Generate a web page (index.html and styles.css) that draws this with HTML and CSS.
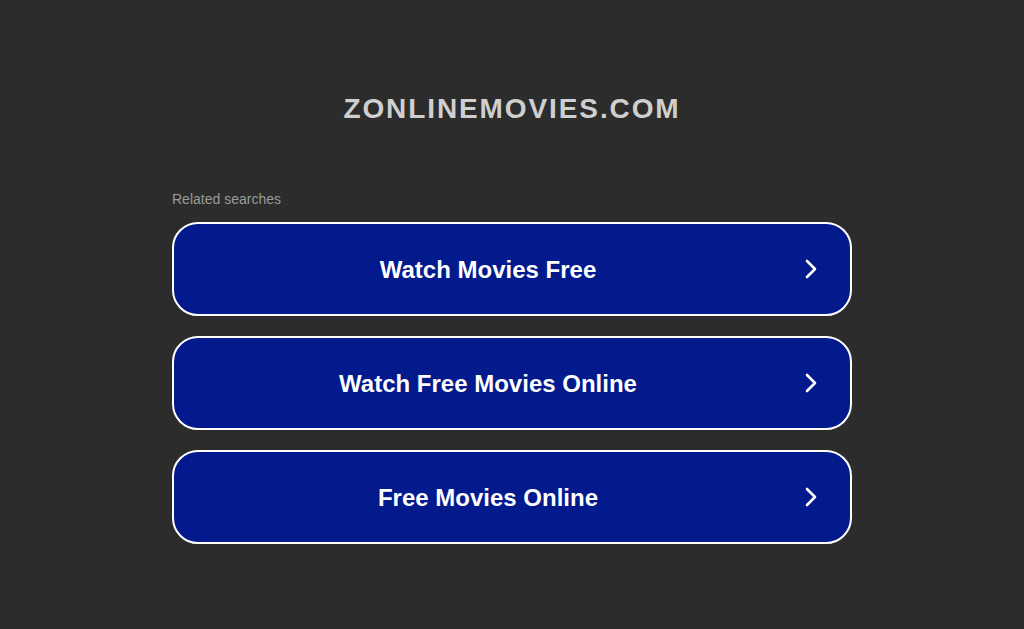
FILE: index.html
```html
<!DOCTYPE html>
<html>
<head>
  <title>zonlinemovies.com</title>
  <link rel="stylesheet" href="styles.css">
</head>
<body>
  <div class="page">
    <h1 class="domain">ZONLINEMOVIES.COM</h1>

    <div class="related">
      <p class="related-title">Related searches</p>

      <a class="search-link" href="#">
        <span class="search-text">Watch Movies Free</span>
        <svg class="arrow" viewBox="0 0 18 22" width="18" height="22">
          <path d="M5 3 L13 11 L5 19" fill="none" stroke="#fff" stroke-width="2.6" stroke-linecap="round" stroke-linejoin="round"/>
        </svg>
      </a>
      <a class="search-link" href="#">
        <span class="search-text">Watch Free Movies Online</span>
        <svg class="arrow" viewBox="0 0 18 22" width="18" height="22">
          <path d="M5 3 L13 11 L5 19" fill="none" stroke="#fff" stroke-width="2.6" stroke-linecap="round" stroke-linejoin="round"/>
        </svg>
      </a>
      <a class="search-link" href="#">
        <span class="search-text">Free Movies Online</span>
        <svg class="arrow" viewBox="0 0 18 22" width="18" height="22">
          <path d="M5 3 L13 11 L5 19" fill="none" stroke="#fff" stroke-width="2.6" stroke-linecap="round" stroke-linejoin="round"/>
        </svg>
      </a>
    </div>
  </div>
</body>
</html>
```

FILE: styles.css
```css
body {
  margin: 0;
  background-color: #2c2c2c;
  font-family: "Liberation Sans", Arial, sans-serif;
}

.page {
  width: 680px;
  margin: 0 auto;
  padding-top: 92px;
}

.domain {
  margin: 0;
  text-align: center;
  color: #cfcfcf;
  font-size: 28px;
  line-height: 34px;
  font-weight: bold;
  letter-spacing: 1.9px;
}

.related {
  margin-top: 64px;
}

.related-title {
  margin: 0 0 14px 0;
  color: #9a9a9a;
  font-size: 14px;
  line-height: 18px;
}

.search-link {
  display: flex;
  align-items: center;
  height: 90px;
  margin-bottom: 20px;
  border: 2px solid #fff;
  border-radius: 26px;
  background-color: #021a8b;
  color: #fff;
  text-decoration: none;
}

.search-text {
  flex: 1;
  padding-top: 2px;
  text-align: center;
  font-size: 24px;
  font-weight: bold;
}

.arrow {
  margin-right: 30px;
}
```
